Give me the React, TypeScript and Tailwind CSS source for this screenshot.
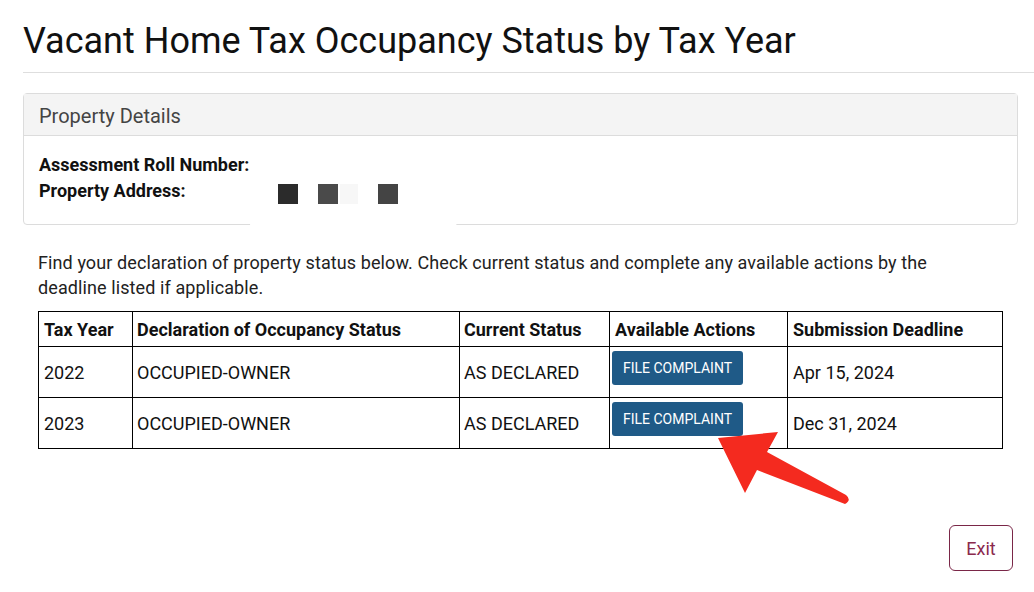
import React from "react";

const rows = [
  { year: "2022", declared: "OCCUPIED-OWNER", status: "AS DECLARED", deadline: "Apr 15, 2024" },
  { year: "2023", declared: "OCCUPIED-OWNER", status: "AS DECLARED", deadline: "Dec 31, 2024" },
];

export default function App() {
  return (
    <div className="relative h-[592px] w-[1034px] overflow-hidden bg-white font-['Roboto',sans-serif] text-[#111]">
      <div className="pl-[23px]">
        <h1 className="pt-[17px] text-[36px] leading-[48px] font-normal text-[#111]">
          Vacant Home Tax Occupancy Status by Tax Year
        </h1>
        <div className="mt-[7px] h-px w-full bg-[#dedede]" />

        {/* property details card */}
        <div className="mt-[20px] w-[995px] rounded-[4px] border border-[#dcdcdc]">
          <div className="flex h-[42px] items-center border-b border-[#dcdcdc] bg-[#f4f4f4] px-[15px] pt-[2px] text-[20px] text-[#444]">
            Property Details
          </div>
          <div className="px-[15px] pt-[16px] pb-[20px] text-[18px] leading-[26px] font-bold text-[#111]">
            <p>Assessment Roll Number:</p>
            <p>Property Address:</p>
          </div>
        </div>

        <div className="w-[995px] px-[15px]">
          <p className="mt-[25px] max-w-[940px] text-[18px] leading-[25px] tracking-[0.1px] text-[#222]">
            Find your declaration of property status below. Check current status and complete any available actions by the deadline listed if applicable.
          </p>

          <table className="mt-[11px] w-[965px] border-collapse text-[18px] text-[#111]">
            <thead>
              <tr className="h-[35px]">
                <th className="w-[94px] border border-black px-[5px] text-left font-bold">Tax Year</th>
                <th className="w-[327px] border border-black px-[4px] text-left font-bold">Declaration of Occupancy Status</th>
                <th className="w-[150px] border border-black px-[4px] text-left font-bold">Current Status</th>
                <th className="w-[178px] border border-black px-[5px] text-left font-bold">Available Actions</th>
                <th className="border border-black px-[5px] text-left font-bold">Submission Deadline</th>
              </tr>
            </thead>
            <tbody>
              {rows.map((r) => (
                <tr key={r.year} className="h-[51px]">
                  <td className="border border-black px-[5px] align-middle">{r.year}</td>
                  <td className="border border-black px-[4px] align-middle">{r.declared}</td>
                  <td className="border border-black px-[4px] align-middle">{r.status}</td>
                  <td className="border border-black px-[2px] pt-[4px] pb-[12px] align-top">
                    <button className="flex h-[34px] w-[131px] items-start justify-center rounded-[3px] bg-[#1f5a87] pt-[9px] text-[14px] leading-[16px] text-white">
                      FILE COMPLAINT
                    </button>
                  </td>
                  <td className="border border-black px-[5px] align-middle">{r.deadline}</td>
                </tr>
              ))}
            </tbody>
          </table>
        </div>

        <div className="mt-[76px] flex w-[995px] justify-end pr-[5px]">
          <button className="h-[46px] w-[64px] rounded-[6px] border border-[#7a2748] text-[18px] text-[#8b2a4d]">
            Exit
          </button>
        </div>
      </div>

      {/* redaction blob and red annotation arrow, drawn over the page */}
      <svg className="absolute left-0 top-0" width="1034" height="592" viewBox="0 0 1034 592">
        <polygon points="270,136 507,136 515,144 456,225 250,225 262,144" fill="#ffffff" />
        <rect x="278" y="184" width="20" height="20" fill="#2b2b2b" />
        <rect x="318" y="184" width="20" height="20" fill="#4a4a4a" />
        <rect x="340" y="184" width="18" height="20" fill="#f7f7f7" />
        <rect x="378" y="184" width="20" height="20" fill="#444444" />
        <path
          d="M718,438 L778,432 L767,452 L846,495 Q852,500 845,504 L757,470 L745,493 Z"
          fill="#f42a1f"
        />
      </svg>
    </div>
  );
}
